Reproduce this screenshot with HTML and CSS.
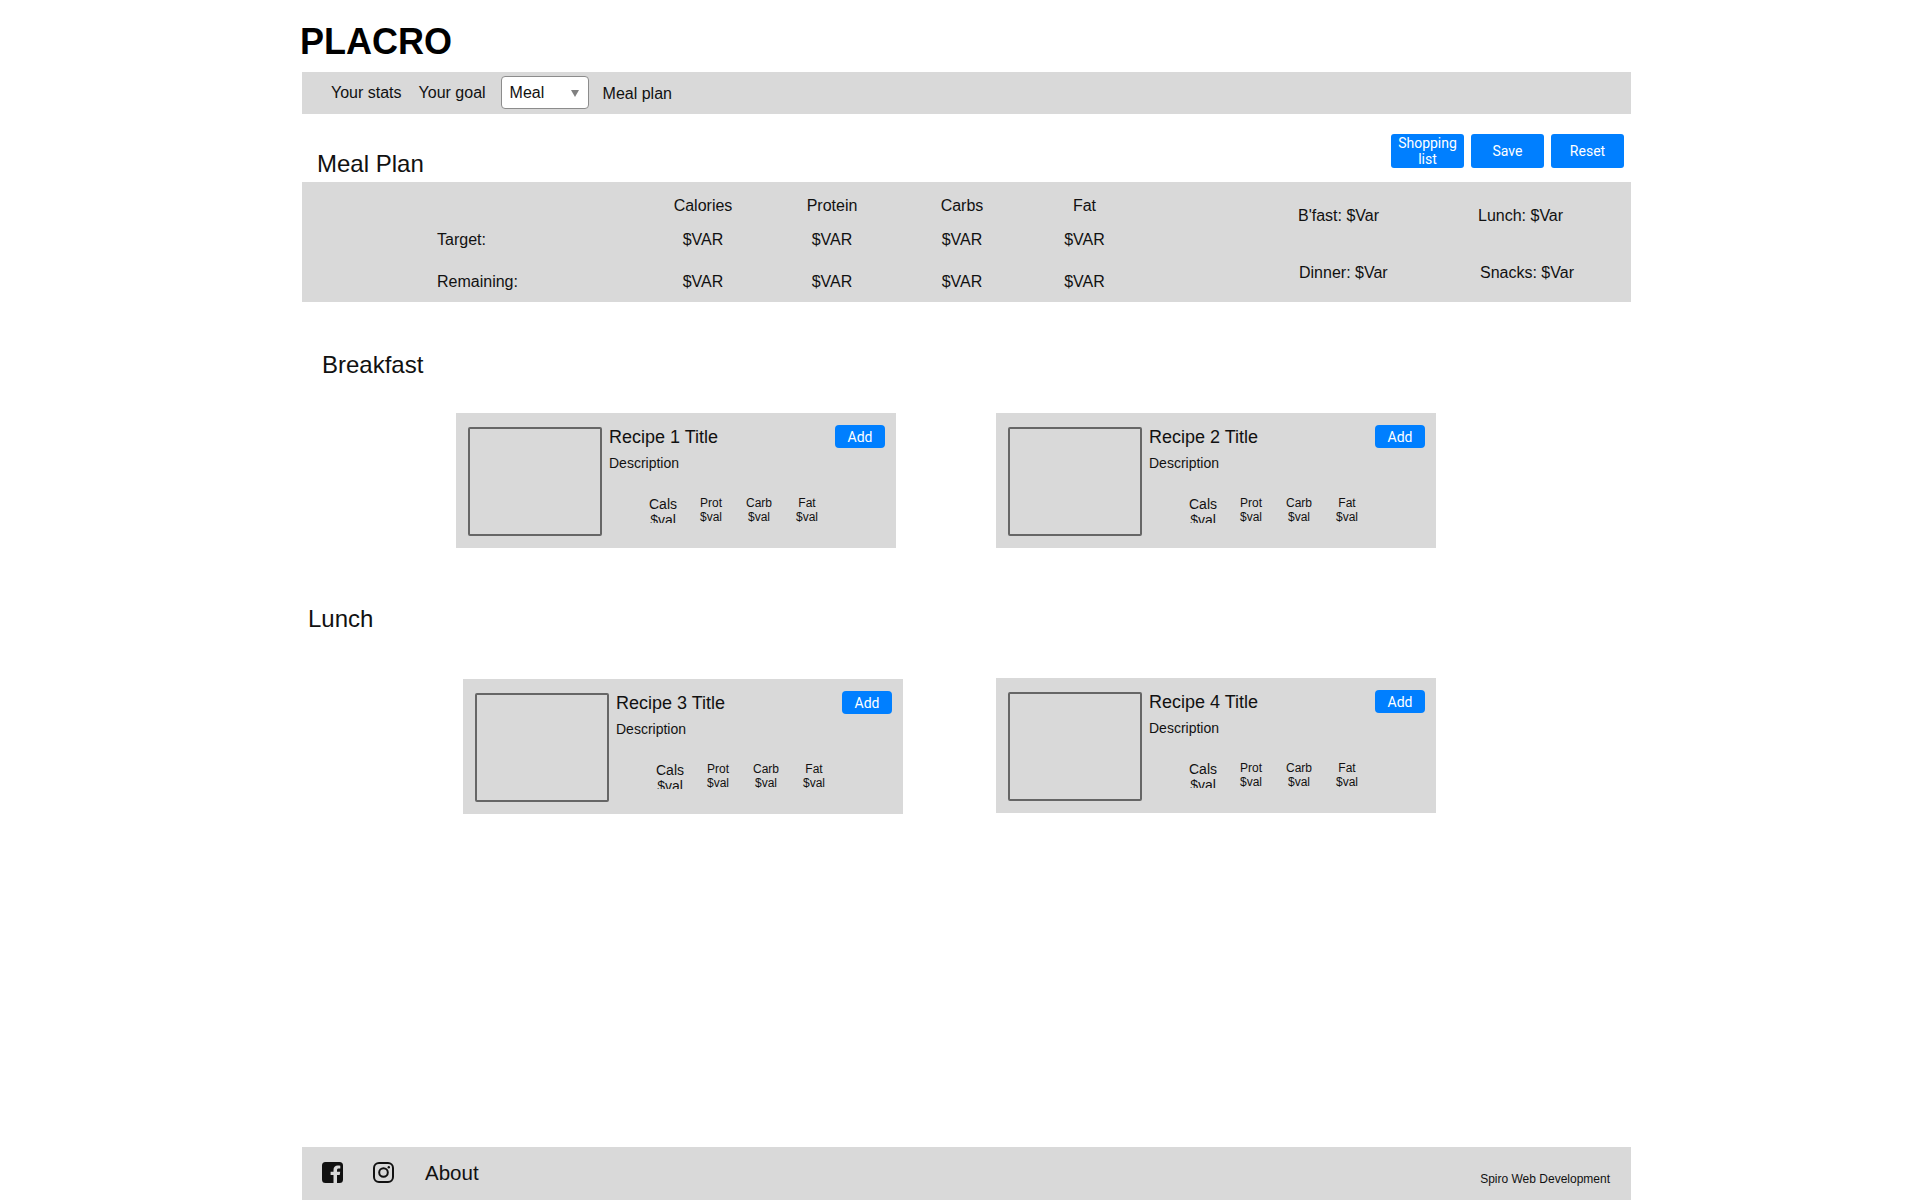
FILE: index.html
```html
<!DOCTYPE html>
<html lang="en">
<head>
    <meta charset="UTF-8">
    <meta name="viewport" content="width=device-width, initial-scale=1.0">
    <title>Placro</title>
    <link rel="stylesheet" href="styles.css">
</head>
<body>
    <div class="page">
        <h1 class="logo">PLACRO</h1>
        <nav class="nav">
            <a href="#">Your stats</a>
            <a href="#">Your goal</a>
            <div class="select-wrap">
                <select>
                    <option>Meal</option>
                </select>
            </div>
            <a href="#" class="nav-plan">Meal plan</a>
        </nav>

        <div class="plan-head">
            <h2>Meal Plan</h2>
            <div class="plan-actions">
                <button type="button" class="btn">Shopping list</button>
                <button type="button" class="btn">Save</button>
                <button type="button" class="btn">Reset</button>
            </div>
        </div>

        <section class="stats">
            <div class="stats-table">
                <span></span>
                <span class="num">Calories</span>
                <span class="num">Protein</span>
                <span class="num">Carbs</span>
                <span class="num">Fat</span>
                <span>Target:</span>
                <span class="num">$VAR</span>
                <span class="num">$VAR</span>
                <span class="num">$VAR</span>
                <span class="num">$VAR</span>
                <span>Remaining:</span>
                <span class="num">$VAR</span>
                <span class="num">$VAR</span>
                <span class="num">$VAR</span>
                <span class="num">$VAR</span>
            </div>
            <div class="stats-meals">
                <span>B'fast: $Var</span>
                <span>Lunch: $Var</span>
                <span class="meal-dinner">Dinner: $Var</span>
                <span class="meal-snacks">Snacks: $Var</span>
            </div>
        </section>

        <h2 class="meal-title breakfast">Breakfast</h2>
        <div class="recipes recipes-breakfast">
            <article class="recipe">
                <div class="recipe-img"></div>
                <div class="recipe-body">
                    <div class="recipe-top">
                        <h3>Recipe 1 Title</h3>
                        <button type="button" class="btn btn-add">Add</button>
                    </div>
                    <p>Description</p>
                    <div class="macros">
                        <div class="macro macro-cals">Cals<br>$val</div>
                        <div class="macro">Prot<br>$val</div>
                        <div class="macro">Carb<br>$val</div>
                        <div class="macro">Fat<br>$val</div>
                    </div>
                </div>
            </article>
            <article class="recipe">
                <div class="recipe-img"></div>
                <div class="recipe-body">
                    <div class="recipe-top">
                        <h3>Recipe 2 Title</h3>
                        <button type="button" class="btn btn-add">Add</button>
                    </div>
                    <p>Description</p>
                    <div class="macros">
                        <div class="macro macro-cals">Cals<br>$val</div>
                        <div class="macro">Prot<br>$val</div>
                        <div class="macro">Carb<br>$val</div>
                        <div class="macro">Fat<br>$val</div>
                    </div>
                </div>
            </article>
        </div>

        <h2 class="meal-title lunch">Lunch</h2>
        <div class="recipes recipes-lunch">
            <article class="recipe recipe-low">
                <div class="recipe-img"></div>
                <div class="recipe-body">
                    <div class="recipe-top">
                        <h3>Recipe 3 Title</h3>
                        <button type="button" class="btn btn-add">Add</button>
                    </div>
                    <p>Description</p>
                    <div class="macros">
                        <div class="macro macro-cals">Cals<br>$val</div>
                        <div class="macro">Prot<br>$val</div>
                        <div class="macro">Carb<br>$val</div>
                        <div class="macro">Fat<br>$val</div>
                    </div>
                </div>
            </article>
            <article class="recipe">
                <div class="recipe-img"></div>
                <div class="recipe-body">
                    <div class="recipe-top">
                        <h3>Recipe 4 Title</h3>
                        <button type="button" class="btn btn-add">Add</button>
                    </div>
                    <p>Description</p>
                    <div class="macros">
                        <div class="macro macro-cals">Cals<br>$val</div>
                        <div class="macro">Prot<br>$val</div>
                        <div class="macro">Carb<br>$val</div>
                        <div class="macro">Fat<br>$val</div>
                    </div>
                </div>
            </article>
        </div>

        <footer class="footer">
            <a href="#" class="social social-fb" aria-label="Facebook">
                <svg width="21" height="21" viewBox="0 0 21 21">
                    <path fill="#111" fill-rule="evenodd" d="M3.5 0h14A3.5 3.5 0 0 1 21 3.500v14a3.500 3.500 0 0 1-3.500 3.500H15v-8h2.700l.5-3.200H15V8.200c0-1 .5-1.700 1.800-1.700h1.500V3.700c-.6-.1-1.500-.2-2.500-.2-2.700 0-4.300 1.600-4.300 4.400v1.900H8.600V13h2.900v8h-8A3.500 3.500 0 0 1 0 17.500v-14A3.500 3.500 0 0 1 3.500 0z"/>
                </svg>
            </a>
            <a href="#" class="social social-ig" aria-label="Instagram">
                <svg width="21" height="21" viewBox="0 0 21 21" fill="none" stroke="#111" stroke-width="2">
                    <rect x="1" y="1" width="19" height="19" rx="5"/>
                    <circle cx="10.500" cy="10.500" r="4.300"/>
                    <circle cx="15.800" cy="5.200" r="1.200" fill="#111" stroke="none"/>
                </svg>
            </a>
            <a href="#" class="footer-about">About</a>
            <span class="footer-credit">Spiro Web Development</span>
        </footer>
    </div>
</body>
</html>
```

FILE: styles.css
```css
* {
    box-sizing: border-box;
}
body {
    margin: 0;
    font-family: "Liberation Sans", Arial, sans-serif;
    color: #111;
    background: #fff;
}
a {
    color: inherit;
    text-decoration: none;
}
h1, h2, h3, p {
    margin: 0;
    font-weight: normal;
}
.page {
    width: 1329px;
    height: 1200px;
    margin-left: 302px;
    display: flex;
    flex-direction: column;
}
.logo {
    height: 72px;
    margin-left: -2px;
    padding-top: 21px;
    font-size: 36px;
    line-height: 42px;
    font-weight: bold;
    color: #000;
}
.nav {
    height: 42px;
    background: #d9d9d9;
    padding-left: 29px;
    display: flex;
    align-items: center;
    font-size: 16px;
}
.nav a {
    margin-right: 17px;
}
.nav .nav-plan {
    margin: 1px 0 0 14px;
}
.select-wrap {
    position: relative;
    width: 88px;
    height: 33px;
    margin: -2px 0 0 -2px;
}
.select-wrap::after {
    content: "";
    position: absolute;
    right: 10px;
    top: 14px;
    border-left: 4px solid transparent;
    border-right: 4px solid transparent;
    border-top: 7px solid #808080;
}
.select-wrap select {
    appearance: none;
    width: 100%;
    height: 100%;
    padding: 0 8px;
    border: 1px solid #8c8c8c;
    border-radius: 4px;
    background: #fff;
    font-family: inherit;
    font-size: 16px;
    color: #111;
}
.plan-head {
    height: 68px;
    padding: 20px 7px 0 15px;
    display: flex;
    justify-content: space-between;
    align-items: flex-start;
}
.plan-head h2 {
    margin-top: 16px;
    font-size: 24px;
    line-height: 28px;
}
.plan-actions {
    display: flex;
    gap: 7px;
}
.btn {
    width: 73px;
    height: 34px;
    padding: 0 4px;
    border: none;
    border-radius: 3px;
    background: #007fff;
    color: #fff;
    font-family: Roboto, sans-serif;
    font-size: 14px;
    line-height: 16px;
}
.stats {
    height: 120px;
    padding-top: 11px;
    background: #d9d9d9;
    display: flex;
    font-size: 16px;
}
.stats-table {
    padding-left: 135px;
    display: grid;
    grid-template-columns: 201px 130px 128px 132px 113px;
    grid-template-rows: 26px 42px 42px;
    align-items: center;
}
.num {
    text-align: center;
}
.stats-meals {
    margin-left: 157px;
    padding-top: 10px;
    display: grid;
    grid-template-columns: 180px 150px;
    grid-template-rows: 26px 26px;
    row-gap: 31px;
    align-items: center;
}
.meal-dinner {
    padding-left: 1px;
}
.meal-snacks {
    padding-left: 2px;
}
.meal-title {
    font-size: 24px;
    line-height: 28px;
}
.breakfast {
    margin: 49px 0 0 20px;
}
.lunch {
    margin: 57px 0 0 6px;
}
.recipes {
    display: flex;
    align-items: flex-start;
}
.recipes-breakfast {
    padding: 34px 0 0 154px;
    gap: 100px;
}
.recipes-lunch {
    padding: 45px 0 0 161px;
    gap: 93px;
}
.recipe {
    width: 440px;
    height: 135px;
    padding: 14px 12px 0;
    background: #d9d9d9;
    display: flex;
    gap: 7px;
}
.recipe-low {
    margin-top: 1px;
}
.recipe-img {
    width: 134px;
    height: 109px;
    flex: none;
    border: 2px solid #666;
    border-radius: 2px;
}
.recipe-body {
    flex: 1;
}
.recipe-top {
    display: flex;
    justify-content: space-between;
    align-items: flex-start;
}
.recipe-top h3 {
    font-size: 18px;
    font-weight: normal;
    line-height: 21px;
}
.btn-add {
    width: 50px;
    height: 23px;
    margin: -2px -1px 0 0;
    border-radius: 4px;
}
.recipe-body p {
    margin-top: 7px;
    font-size: 14px;
    line-height: 16px;
}
.macros {
    height: 28px;
    margin: 24px 0 0 30px;
    display: flex;
    overflow: hidden;
}
.macro {
    width: 48px;
    padding-top: 1px;
    text-align: center;
    font-size: 12px;
    line-height: 14px;
}
.macro-cals {
    font-size: 14px;
    line-height: 16px;
}
.footer {
    height: 53px;
    margin-top: auto;
    padding: 0 21px 0 20px;
    background: #d9d9d9;
    display: flex;
    align-items: center;
}
.social {
    display: flex;
    margin: -3px 30px 0 0;
}
.footer-about {
    margin: -1px 0 0 1px;
    font-size: 20.500px;
}
.footer-credit {
    margin: 10px 0 0 auto;
    font-size: 12px;
}
```
